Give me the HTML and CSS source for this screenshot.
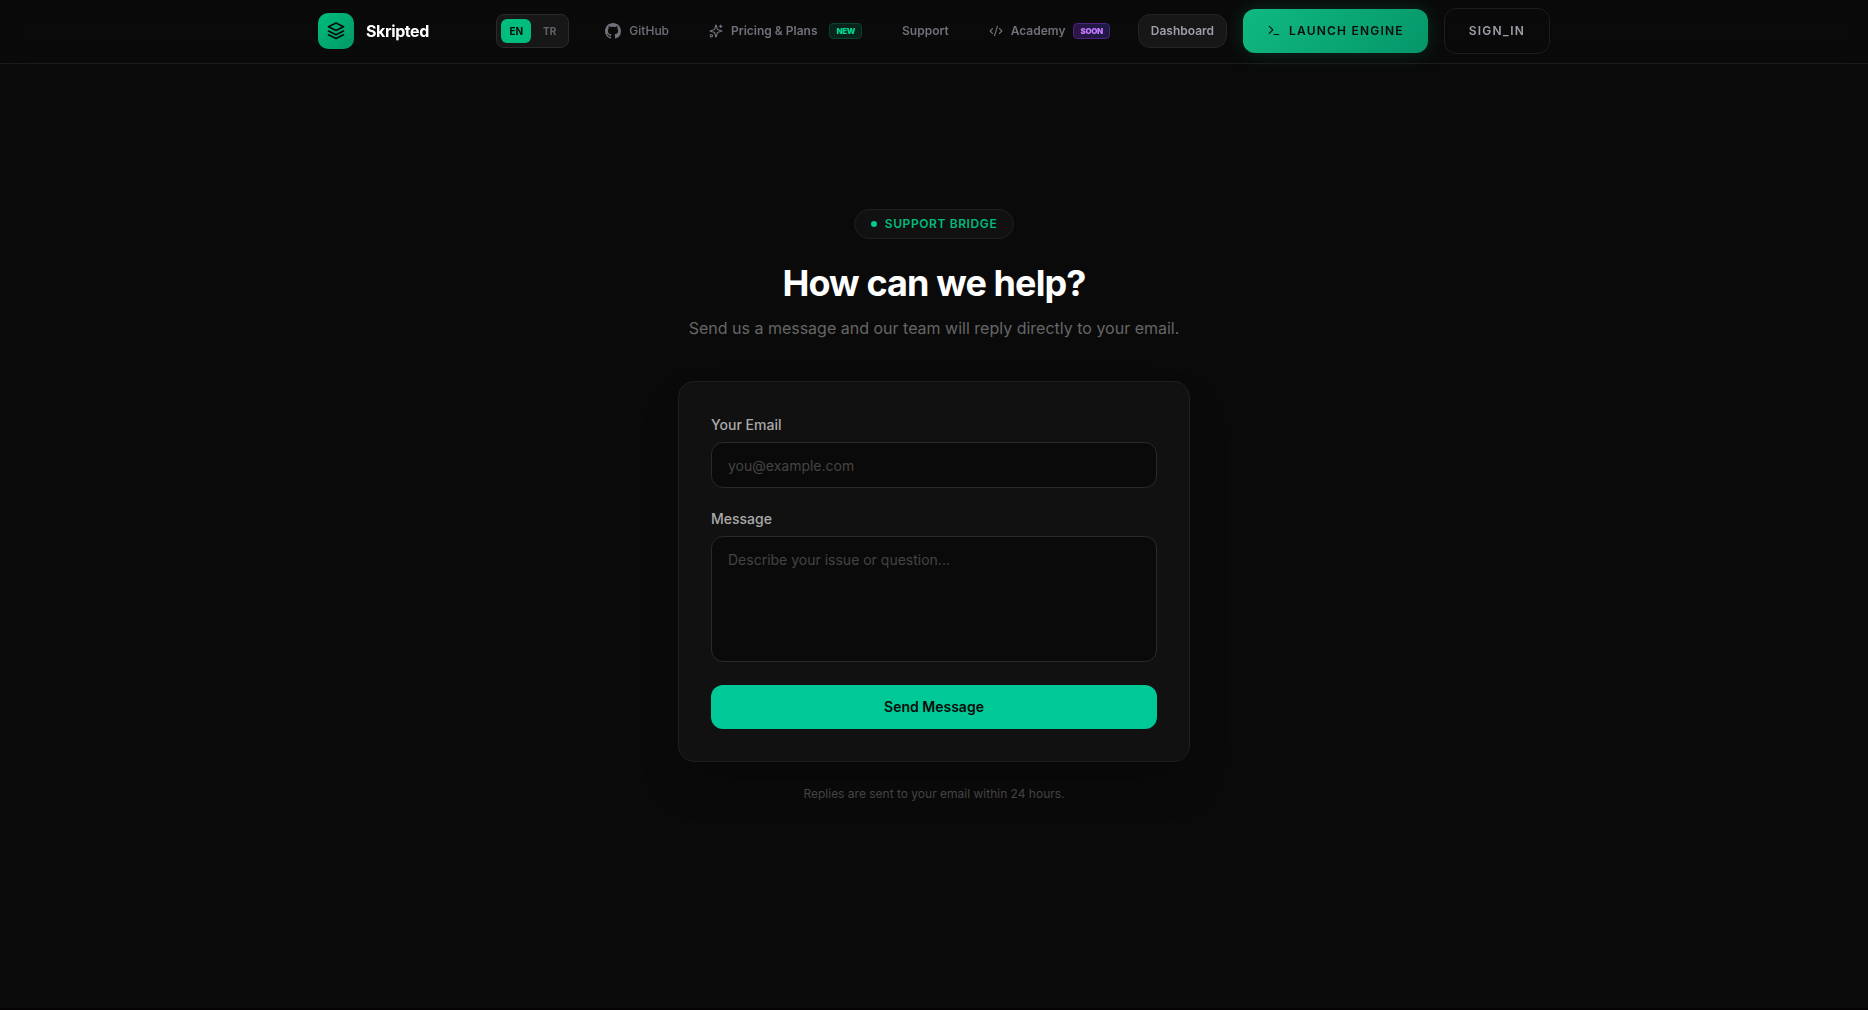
FILE: index.html
```html
<!DOCTYPE html>
<html lang="en">
<head>
    <meta charset="UTF-8">
    <meta name="viewport" content="width=device-width, initial-scale=1.0">
    <title>Skripted - Support</title>
    <link rel="stylesheet" href="styles.css">
</head>
<body>

<header class="navbar">
    <div class="navbar-inner">
        <a href="#" class="brand">
            <span class="brand-logo">
                <svg width="20" height="20" viewBox="0 0 24 24" fill="none" stroke="currentColor" stroke-width="2" stroke-linecap="round" stroke-linejoin="round">
                    <path d="M12 2.5 L21 7 L12 11.5 L3 7 Z"/>
                    <path d="M3 12 L12 16.5 L21 12"/>
                    <path d="M3 16.5 L12 21 L21 16.5"/>
                </svg>
            </span>
            <span class="brand-name">Skripted</span>
        </a>

        <nav class="nav">
            <div class="lang-switch">
                <button type="button" class="lang active">EN</button>
                <button type="button" class="lang">TR</button>
            </div>
            <a href="#" class="nav-link github">
                <svg width="16" height="16" viewBox="0 0 16 16" fill="currentColor">
                    <path d="M8 0C3.58 0 0 3.58 0 8c0 3.54 2.29 6.53 5.47 7.59.4.07.55-.17.55-.38 0-.19-.01-.82-.01-1.49-2.01.37-2.53-.49-2.69-.94-.09-.23-.48-.94-.82-1.13-.28-.15-.68-.52-.01-.53.63-.01 1.08.58 1.23.82.72 1.21 1.87.87 2.33.66.07-.52.28-.87.51-1.07-1.78-.2-3.64-.89-3.64-3.95 0-.87.31-1.59.82-2.15-.08-.2-.36-1.02.08-2.12 0 0 .67-.21 2.2.82.64-.18 1.32-.27 2-.27s1.36.09 2 .27c1.53-1.04 2.2-.82 2.2-.82.44 1.1.16 1.92.08 2.12.51.56.82 1.27.82 2.15 0 3.07-1.87 3.75-3.65 3.95.29.25.54.73.54 1.48 0 1.07-.01 1.93-.01 2.2 0 .21.15.46.55.38A8.01 8.01 0 0 0 16 8c0-4.42-3.58-8-8-8z"/>
                </svg>
                <span>GitHub</span>
            </a>
            <a href="#" class="nav-link">
                <svg width="14" height="14" viewBox="0 0 24 24" fill="none" stroke="currentColor" stroke-width="2" stroke-linecap="round" stroke-linejoin="round">
                    <path d="M9.94 15.5A2 2 0 0 0 8.5 14.06l-6.14-1.58a.5.5 0 0 1 0-.96L8.5 9.94A2 2 0 0 0 9.94 8.5l1.58-6.14a.5.5 0 0 1 .96 0l1.58 6.14a2 2 0 0 0 1.44 1.44l6.14 1.58a.5.5 0 0 1 0 .96l-6.14 1.58a2 2 0 0 0-1.44 1.44l-1.58 6.14a.5.5 0 0 1-.96 0z"/>
                    <path d="M20 2v4M22 4h-4"/>
                    <circle cx="4" cy="20" r="2"/>
                </svg>
                <span>Pricing &amp; Plans</span>
                <span class="tag tag-new">NEW</span>
            </a>
            <a href="#" class="nav-link">Support</a>
            <a href="#" class="nav-link">
                <svg width="14" height="14" viewBox="0 0 24 24" fill="none" stroke="currentColor" stroke-width="2" stroke-linecap="round" stroke-linejoin="round">
                    <path d="M18 16l4-4-4-4M6 8l-4 4 4 4M14.5 4l-5 16"/>
                </svg>
                <span>Academy</span>
                <span class="tag tag-soon">SOON</span>
            </a>
            <a href="#" class="dashboard">Dashboard</a>
            <button type="button" class="launch">
                <svg width="14" height="14" viewBox="0 0 24 24" fill="none" stroke="currentColor" stroke-width="2" stroke-linecap="round" stroke-linejoin="round">
                    <path d="M4 16l6-6-6-6M12 18h8"/>
                </svg>
                <span>LAUNCH ENGINE</span>
            </button>
            <button type="button" class="sign-in">SIGN_IN</button>
        </nav>
    </div>
</header>

<main class="support">
    <div class="pill"><span class="dot"></span>SUPPORT BRIDGE</div>
    <h1>How can we help?</h1>
    <p class="subtitle">Send us a message and our team will reply directly to your email.</p>

    <form class="card">
        <div class="field">
            <label for="email">Your Email</label>
            <input type="email" id="email" placeholder="you@example.com">
        </div>
        <div class="field">
            <label for="message">Message</label>
            <textarea id="message" placeholder="Describe your issue or question..."></textarea>
        </div>
        <button type="submit" class="send">Send Message</button>
    </form>

    <p class="note">Replies are sent to your email within 24 hours.</p>
</main>

</body>
</html>
```
FILE: styles.css
```css
* {
    box-sizing: border-box;
}
html {
    background-color: #0a0a0a;
}
body {
    margin: 0;
    min-height: 100vh;
    background-color: #0a0a0a;
    border-bottom: 2px solid #050304;
    color: #fff;
    font-family: Inter, "Liberation Sans", sans-serif;
}
button, input, textarea {
    font-family: inherit;
}
button {
    cursor: pointer;
}
a {
    color: inherit;
    text-decoration: none;
}
svg {
    display: block;
    flex-shrink: 0;
}

/* navbar */
.navbar {
    height: 64px;
    border-bottom: 1px solid #1b1b1b;
    backdrop-filter: blur(12px);
}
.navbar-inner {
    max-width: 1280px;
    height: 62px;
    margin: 0 auto;
    padding: 0 24px;
    display: flex;
    align-items: center;
    justify-content: space-between;
}
.brand {
    display: flex;
    align-items: center;
    gap: 12px;
}
.brand-logo {
    width: 36px;
    height: 36px;
    display: flex;
    align-items: center;
    justify-content: center;
    border-radius: 10px;
    background: linear-gradient(135deg, #00bc7d, #009966);
    color: #0a0a0a;
}
.brand-name {
    font-size: 16px;
    font-weight: 700;
    letter-spacing: -0.025em;
}
.nav {
    display: flex;
    align-items: center;
    gap: 16px;
    white-space: nowrap;
}
.lang-switch {
    display: flex;
    gap: 4px;
    margin-right: 8px;
    padding: 4px;
    background-color: #171717;
    border: 1px solid #2b2b2b;
    border-radius: 8px;
}
.lang {
    padding: 4px 8px;
    border: none;
    border-radius: 6px;
    background: none;
    color: #62626b;
    font-size: 10px;
    font-weight: 700;
    line-height: 16px;
}
.lang.active {
    background-color: #00bc7d;
    color: #0a0a0a;
}
.nav-link {
    display: flex;
    align-items: center;
    gap: 8px;
    padding: 8px 12px;
    color: #71717b;
    font-size: 12px;
    font-weight: 600;
    line-height: 16px;
}
.nav-link.github {
    font-weight: 500;
}
.tag {
    padding: 0 6px;
    border: 1px solid;
    border-radius: 4px;
    font-size: 8px;
    font-weight: 900;
    line-height: 14px;
    letter-spacing: -0.05em;
}
.tag-new {
    margin-left: 4px;
    background-color: #09241b;
    border-color: #0a4230;
    color: #00d492;
}
.tag-soon {
    background: linear-gradient(90deg, #2c1745, #1c1a45);
    border-color: #4e2080;
    color: #c27aff;
}
.dashboard {
    padding: 8px 12px;
    background-color: #171717;
    border: 1px solid #242424;
    border-radius: 12px;
    color: #9f9fa9;
    font-size: 12px;
    font-weight: 600;
    line-height: 16px;
}
.launch {
    display: flex;
    align-items: center;
    gap: 8px;
    padding: 14px 24px;
    border: none;
    border-radius: 12px;
    background: linear-gradient(135deg, #10b981, #059669);
    box-shadow: 0 0 20px rgba(16, 185, 129, 0.2);
    color: #0a0a0a;
    font-size: 12px;
    font-weight: 600;
    line-height: 16px;
    letter-spacing: 0.1em;
}
.sign-in {
    padding: 14px 24px;
    background: none;
    border: 1px solid #1d1d1d;
    border-radius: 12px;
    color: #9f9fa9;
    font-size: 12px;
    font-weight: 600;
    line-height: 16px;
    letter-spacing: 0.1em;
}

/* support */
.support {
    display: flex;
    flex-direction: column;
    align-items: center;
    padding: 145px 16px 80px;
}
.pill {
    display: flex;
    align-items: center;
    gap: 8px;
    padding: 6px 16px;
    background-color: #111;
    border: 1px solid #202020;
    border-radius: 15px;
    color: #00bc7d;
    font-size: 12px;
    font-weight: 600;
    line-height: 16px;
    letter-spacing: 0.05em;
}
.dot {
    width: 6px;
    height: 6px;
    border-radius: 50%;
    background-color: #00c896;
}
h1 {
    margin: 24px 0 12px;
    font-size: 36px;
    font-weight: 700;
    line-height: 40px;
    letter-spacing: -0.025em;
}
.subtitle {
    margin: 0 0 40px;
    color: #666;
    font-size: 16px;
    line-height: 26px;
}
.card {
    width: 100%;
    max-width: 512px;
    display: flex;
    flex-direction: column;
    padding: 32px;
    background-color: #111;
    border: 1px solid #1e1e1e;
    border-radius: 16px;
    box-shadow: 0 24px 48px -12px rgba(0, 0, 0, 0.25);
}
.field {
    display: flex;
    flex-direction: column;
    margin-bottom: 20px;
}
.field label {
    margin-bottom: 6px;
    color: #aaa;
    font-size: 14px;
    font-weight: 500;
    line-height: 22px;
}
.field input,
.field textarea {
    width: 100%;
    padding: 12px 16px;
    background-color: #0a0a0a;
    border: 1px solid #2a2a2a;
    border-radius: 12px;
    color: #fff;
    font-size: 14px;
    line-height: 22px;
    outline: none;
}
.field input {
    height: 46px;
}
.field textarea {
    height: 126px;
    resize: none;
}
.field input::placeholder,
.field textarea::placeholder {
    color: #444;
}
.send {
    margin-top: 3px;
    padding: 12px;
    background-color: #00c896;
    border: none;
    border-radius: 12px;
    color: #0a0a0a;
    font-size: 14px;
    font-weight: 600;
    line-height: 20px;
}
.note {
    margin: 24px 0 0;
    color: #444;
    font-size: 12px;
    line-height: 16px;
}
```
